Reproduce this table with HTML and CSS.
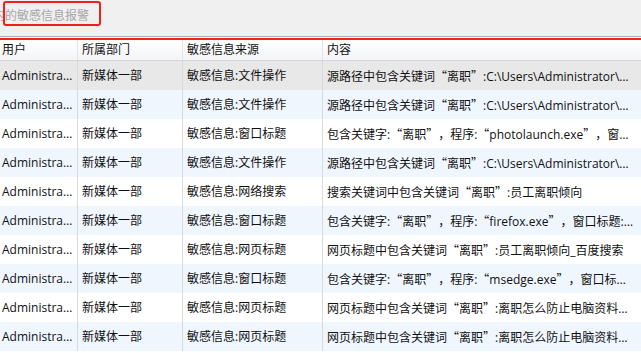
FILE: index.html
```html
<!DOCTYPE html>
<html lang="zh-CN">
<head>
<meta charset="utf-8">
<title>敏感信息报警</title>
<link rel="stylesheet" href="styles.css">
</head>
<body>
<div class="page">
  <div class="topbar">
    <div class="title">内的敏感信息报警</div>
    <div class="mark"></div>
  </div>
  <div class="rule-gray"></div>
  <div class="rule-gap"></div>
  <div class="rule-red"></div>
  <div class="grid">
    <div class="row head">
      <div class="cell c1">用户</div>
      <div class="cell">所属部门</div>
      <div class="cell">敏感信息来源</div>
      <div class="cell last">内容</div>
    </div>
    <div class="row sel">
      <div class="cell c1">Administrator</div>
      <div class="cell">新媒体一部</div>
      <div class="cell">敏感信息:文件操作</div>
      <div class="cell last">源路径中包含关键词<span class="lq">“</span>离职<span class="rq">”</span>:C:\Users\Administrator\Desktop\离职交接.docx</div>
    </div>
    <div class="row alt">
      <div class="cell c1">Administrator</div>
      <div class="cell">新媒体一部</div>
      <div class="cell">敏感信息:文件操作</div>
      <div class="cell last">源路径中包含关键词<span class="lq">“</span>离职<span class="rq">”</span>:C:\Users\Administrator\Desktop\离职交接.docx</div>
    </div>
    <div class="row">
      <div class="cell c1">Administrator</div>
      <div class="cell">新媒体一部</div>
      <div class="cell">敏感信息:窗口标题</div>
      <div class="cell last">包含关键字:<span class="lq">“</span>离职<span class="rq">”</span>，程序:<span class="lq">“</span>photolaunch.exe<span class="rq">”</span>，窗口标题:离职</div>
    </div>
    <div class="row alt">
      <div class="cell c1">Administrator</div>
      <div class="cell">新媒体一部</div>
      <div class="cell">敏感信息:文件操作</div>
      <div class="cell last">源路径中包含关键词<span class="lq">“</span>离职<span class="rq">”</span>:C:\Users\Administrator\Desktop\离职交接.docx</div>
    </div>
    <div class="row">
      <div class="cell c1">Administrator</div>
      <div class="cell">新媒体一部</div>
      <div class="cell">敏感信息:网络搜索</div>
      <div class="cell last">搜索关键词中包含关键词<span class="lq">“</span>离职<span class="rq">”</span>:员工离职倾向</div>
    </div>
    <div class="row alt">
      <div class="cell c1">Administrator</div>
      <div class="cell">新媒体一部</div>
      <div class="cell">敏感信息:窗口标题</div>
      <div class="cell last">包含关键字:<span class="lq">“</span>离职<span class="rq">”</span>，程序:<span class="lq">“</span>firefox.exe<span class="rq">”</span>，窗口标题:员工离职倾向</div>
    </div>
    <div class="row">
      <div class="cell c1">Administrator</div>
      <div class="cell">新媒体一部</div>
      <div class="cell">敏感信息:网页标题</div>
      <div class="cell last">网页标题中包含关键词<span class="lq">“</span>离职<span class="rq">”</span>:员工离职倾向_百度搜索</div>
    </div>
    <div class="row alt">
      <div class="cell c1">Administrator</div>
      <div class="cell">新媒体一部</div>
      <div class="cell">敏感信息:窗口标题</div>
      <div class="cell last">包含关键字:<span class="lq">“</span>离职<span class="rq">”</span>，程序:<span class="lq">“</span>msedge.exe<span class="rq">”</span>，窗口标题:员工离职倾向</div>
    </div>
    <div class="row">
      <div class="cell c1">Administrator</div>
      <div class="cell">新媒体一部</div>
      <div class="cell">敏感信息:网页标题</div>
      <div class="cell last">网页标题中包含关键词<span class="lq">“</span>离职<span class="rq">”</span>:离职怎么防止电脑资料被拷贝</div>
    </div>
    <div class="row alt">
      <div class="cell c1">Administrator</div>
      <div class="cell">新媒体一部</div>
      <div class="cell">敏感信息:网页标题</div>
      <div class="cell last">网页标题中包含关键词<span class="lq">“</span>离职<span class="rq">”</span>:离职怎么防止电脑资料被拷贝</div>
    </div>
  </div>
</div>
</body>
</html>
```
FILE: styles.css
```css
html, body {
  margin: 0;
  padding: 0;
  background: #ffffff;
}
.page {
  width: 641px;
  height: 353px;
  overflow: hidden;
  font-family: "Open Sans", "Noto Sans CJK SC", sans-serif;
  font-size: 12px;
  color: #111;
}
.topbar {
  position: relative;
  height: 36px;
  background: #f0f0f0;
  overflow: hidden;
}
.title {
  padding-top: 8px;
  line-height: 16px;
  margin-left: -7px;
  color: #a6a6a6;
  white-space: nowrap;
}
.mark {
  position: absolute;
  left: 3px;
  top: 1px;
  width: 94px;
  height: 21px;
  border: 2px solid #f0201a;
  border-radius: 3px;
}
.rule-gray {
  height: 1px;
  background: #b0b0b0;
}
.rule-gap {
  height: 1px;
  background: #f7f7f7;
}
.rule-red {
  height: 2px;
  background: #f32315;
}
.row {
  display: grid;
  grid-template-columns: 78px 105px 140px 1fr;
  height: 29px;
  background: #ffffff;
}
.row.alt {
  background: #eff6fe;
}
.row.sel {
  background: #e8e8e8;
}
.row.head {
  height: 20px;
  background: linear-gradient(#ffffff, #f3f4f6);
  border-bottom: 1px solid #d6d6d6;
}
.cell {
  box-sizing: border-box;
  display: block;
  padding-left: 4px;
  padding-right: 2px;
  border-right: 1px solid #dadada;
  white-space: nowrap;
  overflow: hidden;
  text-overflow: ellipsis;
  min-width: 0;
  line-height: 29px;
}
.cell.c1 {
  padding-left: 2px;
}
.cell.last {
  border-right: none;
  padding-right: 8px;
}
.head .cell {
  border-right-color: #e4e4e4;
  line-height: 20px;
}
.lq, .rq {
  display: inline-block;
  width: 12px;
  font-family: "Noto Sans CJK SC", sans-serif;
}
.lq {
  text-align: right;
}
.rq {
  text-align: left;
}
```
